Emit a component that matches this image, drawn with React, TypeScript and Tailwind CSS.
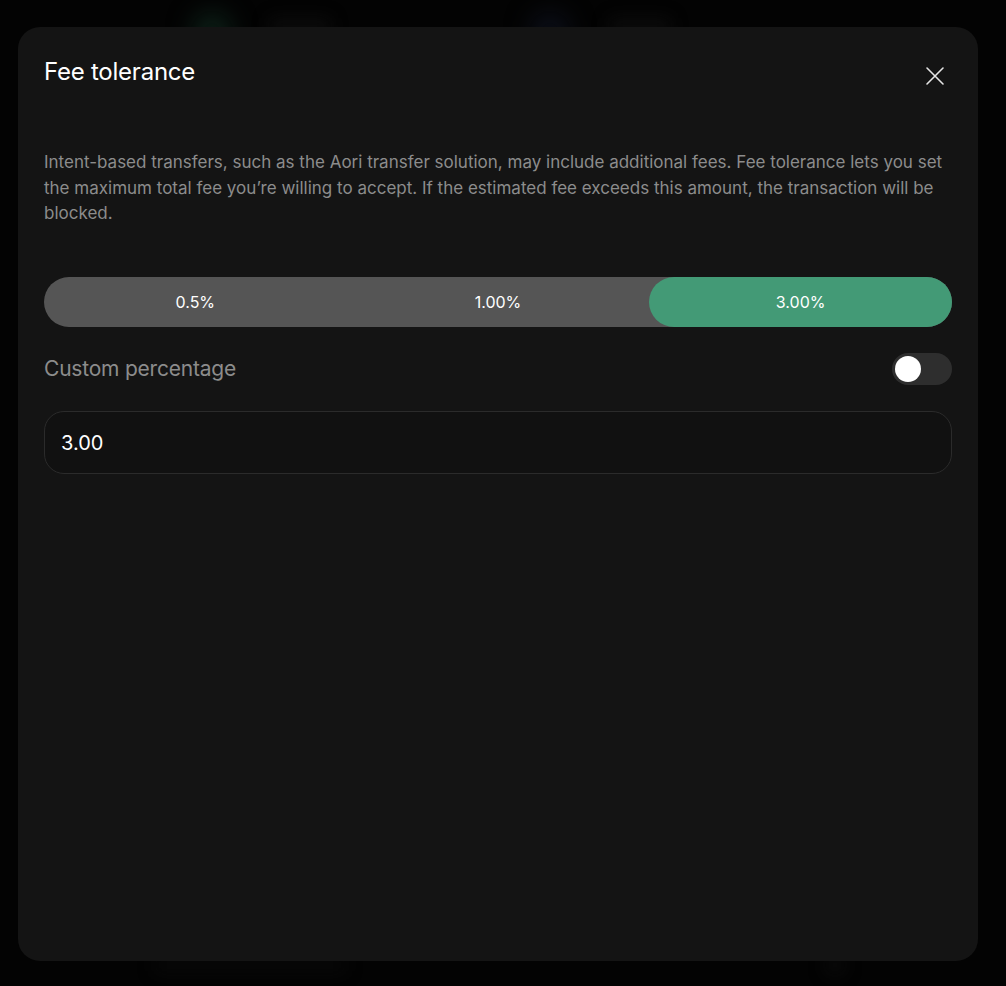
import { useState } from 'react'

const OPTIONS = ['0.5%', '1.00%', '3.00%']

/* modal shown over a dimmed page: fee tolerance settings */
export default function App() {
  const [sel, setSel] = useState(2)
  const [custom, setCustom] = useState(false)
  const [value, setValue] = useState('3.00')

  return (
    <div className="relative h-[986px] w-full overflow-hidden bg-[#030303] font-['Inter',sans-serif]">
      {/* faint page content behind the overlay */}
      <div className="absolute left-[192px] top-[12px] h-[40px] w-[40px] rounded-full bg-[#0c1f17] blur-md" />
      <div className="absolute left-[270px] top-[18px] h-[20px] w-[60px] rounded bg-[#0b0b0b] blur-sm" />
      <div className="absolute left-[530px] top-[12px] h-[40px] w-[40px] rounded-full bg-[#0b0e18] blur-md" />
      <div className="absolute left-[610px] top-[18px] h-[20px] w-[60px] rounded bg-[#0b0b0b] blur-sm" />
      <div className="absolute left-[155px] top-[958px] h-[14px] w-[190px] rounded bg-[#080808] blur-sm" />
      <div className="absolute left-[825px] top-[955px] h-[20px] w-[20px] rounded-full bg-[#0a0a0a] blur-sm" />

      <div className="relative ml-[18px] mt-[27px] flex h-[934px] w-[960px] flex-col rounded-[22px] bg-[#141414] px-[26px] pt-[30px]">
        <div className="flex items-start justify-between">
          <h2 className="text-[24px] leading-[30px] tracking-[-0.01em] text-white">Fee tolerance</h2>
          <button className="mr-[7px] mt-[9px] text-[#e5e5e5]">
            <svg width="20" height="20" viewBox="0 0 20 20" fill="none" stroke="currentColor" strokeWidth="1.6" strokeLinecap="round">
              <path d="M2 2L18 18M18 2L2 18" />
            </svg>
          </button>
        </div>

        <p className="mt-[63px] text-[17px] leading-[25.5px] text-[#8c8c8c]">
          Intent-based transfers, such as the Aori transfer solution, may include additional fees. Fee tolerance lets you set the maximum total fee you’re willing to accept. If the estimated fee exceeds this amount, the transaction will be blocked.
        </p>

        <div className="mt-[50px] grid h-[50px] grid-cols-3 rounded-full bg-[#555555]">
          {OPTIONS.map((o, i) => (
            <button
              key={o}
              onClick={() => setSel(i)}
              className={'rounded-full text-[16px] text-white ' + (sel === i ? 'bg-[#439a76]' : '')}
            >
              {o}
            </button>
          ))}
        </div>

        <div className="mt-[26px] flex items-center justify-between">
          <span className="text-[21px] tracking-[-0.01em] text-[#8c8c8c]">Custom percentage</span>
          <button
            onClick={() => setCustom((c) => !c)}
            className={'flex h-[32px] w-[60px] items-center rounded-full px-[3px] ' + (custom ? 'justify-end bg-[#439a76]' : 'bg-[#2e2e2e]')}
          >
            <span className="h-[26px] w-[26px] rounded-full bg-white" />
          </button>
        </div>

        <input
          value={value}
          onChange={(e) => setValue(e.target.value)}
          className="mt-[26px] h-[63px] w-full rounded-[20px] border border-[#2b2b2b] bg-[#111111] px-[16px] pt-[2px] text-[20px] text-white outline-none"
        />
      </div>
    </div>
  )
}
